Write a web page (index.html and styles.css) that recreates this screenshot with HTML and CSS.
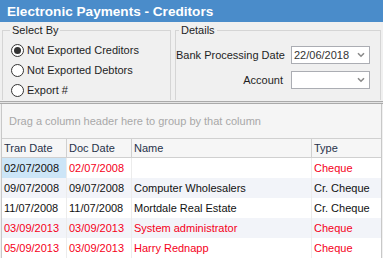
FILE: index.html
```html
<!DOCTYPE html>
<html lang="en">
<head>
    <meta charset="UTF-8">
    <title>Electronic Payments - Creditors</title>
    <link rel="stylesheet" href="styles.css">
</head>
<body>

<div class="window">
    <div class="titlebar">Electronic Payments - Creditors</div>

    <div class="filters">
        <fieldset class="group select-by">
            <legend>Select By</legend>
            <label class="radio"><span class="circle checked"></span>Not Exported Creditors</label>
            <label class="radio"><span class="circle"></span>Not Exported Debtors</label>
            <label class="radio"><span class="circle"></span>Export #</label>
        </fieldset>

        <fieldset class="group details">
            <legend>Details</legend>
            <div class="field-grid">
                <span class="field-label">Bank Processing Date</span>
                <div class="combo">
                    <span>22/06/2018</span>
                    <svg class="chevron" width="8" height="6" viewBox="0 0 8 6"><path d="M1 1.2 L4 4.2 L7 1.2" fill="none" stroke="#8a8a8a" stroke-width="1.6"/></svg>
                </div>
                <span class="field-label">Account</span>
                <div class="combo">
                    <span></span>
                    <svg class="chevron" width="8" height="6" viewBox="0 0 8 6"><path d="M1 1.2 L4 4.2 L7 1.2" fill="none" stroke="#8a8a8a" stroke-width="1.6"/></svg>
                </div>
            </div>
        </fieldset>
    </div>

    <div class="splitter"></div>

    <div class="grid">
        <div class="group-panel">Drag a column header here to group by that column</div>

        <div class="row header">
            <div class="cell">Tran Date</div>
            <div class="cell">Doc Date</div>
            <div class="cell">Name</div>
            <div class="cell">Type</div>
        </div>

        <div class="row">
            <div class="cell selected">02/07/2008</div>
            <div class="cell red">02/07/2008</div>
            <div class="cell"></div>
            <div class="cell red">Cheque</div>
        </div>
        <div class="row alt">
            <div class="cell">09/07/2008</div>
            <div class="cell">09/07/2008</div>
            <div class="cell">Computer Wholesalers</div>
            <div class="cell">Cr. Cheque</div>
        </div>
        <div class="row">
            <div class="cell">11/07/2008</div>
            <div class="cell">11/07/2008</div>
            <div class="cell">Mortdale Real Estate</div>
            <div class="cell">Cr. Cheque</div>
        </div>
        <div class="row alt red">
            <div class="cell">03/09/2013</div>
            <div class="cell">03/09/2013</div>
            <div class="cell">System administrator</div>
            <div class="cell">Cheque</div>
        </div>
        <div class="row red">
            <div class="cell">05/09/2013</div>
            <div class="cell">03/09/2013</div>
            <div class="cell">Harry Rednapp</div>
            <div class="cell">Cheque</div>
        </div>
    </div>
</div>

</body>
</html>
```

FILE: styles.css
```css
body {
    margin: 0;
    font-family: "Liberation Sans", Arial, sans-serif;
    font-size: 11px;
    color: #1e1e1e;
    background-color: #f0f0f0;
}
.window {
    width: 383px;
    height: 258px;
    overflow: hidden;
    background-color: #f0f0f0;
}
.titlebar {
    height: 22px;
    line-height: 23px;
    padding-left: 7px;
    background-color: #4a8cca;
    color: white;
    font-size: 13.6px;
    font-weight: bold;
}

/* filter panel */
.filters {
    display: flex;
    gap: 4px;
    height: 78px;
    padding: 2px 2px 0 2px;
    box-sizing: border-box;
}
.group {
    margin: 0;
    padding: 0;
    min-width: 0;
    border: 1px solid #d5d5d5;
    border-bottom: none;
}
.group legend {
    padding: 0 2px;
    line-height: 13px;
}
.select-by {
    width: 169px;
    box-sizing: border-box;
}
.select-by legend {
    margin-left: 7px;
}
.details {
    flex: 1;
}
.details legend {
    margin-left: 3px;
}
.radio {
    display: flex;
    align-items: center;
    height: 20px;
    padding-left: 8px;
}
.select-by .radio:first-of-type {
    margin-top: 3px;
}
.circle {
    position: relative;
    width: 11px;
    height: 11px;
    margin-right: 3px;
    border: 1px solid #333;
    border-radius: 50%;
    background-color: white;
}
.circle.checked::after {
    content: "";
    position: absolute;
    left: 2px;
    top: 2px;
    width: 7px;
    height: 7px;
    border-radius: 50%;
    background-color: #333;
}
.field-grid {
    display: grid;
    grid-template-columns: 107px 79px;
    grid-auto-rows: 18px;
    column-gap: 8px;
    row-gap: 7px;
    align-items: center;
    margin-top: 9px;
}
.field-label {
    text-align: right;
    white-space: nowrap;
}
.combo {
    display: flex;
    align-items: center;
    justify-content: space-between;
    height: 18px;
    box-sizing: border-box;
    padding: 0 4px 0 2px;
    border: 1px solid #abadb3;
    background-color: white;
    color: #333;
}

.splitter {
    height: 1px;
    margin-top: 1px;
    border-top: 1px solid #aaaaaa;
    border-bottom: 1px solid #aaaaaa;
    background-color: #e4e4e4;
}

/* grid */
.grid {
    margin: 0 1px;
    border-left: 1px solid #c8c8c8;
    border-right: 1px solid #c8c8c8;
    background-color: white;
}
.group-panel {
    height: 34px;
    line-height: 35px;
    padding-left: 7px;
    background-color: #f5f5f5;
    color: #a8a8a8;
    border-bottom: 1px solid #d0d0d0;
}
.row {
    display: grid;
    grid-template-columns: 65px 65px 180px auto;
    height: 20px;
    line-height: 20px;
    color: #111;
}
.row.alt {
    background-color: #f2f4f9;
}
.row.header {
    height: 18px;
    line-height: 18px;
    background-color: #f6f6f6;
    border-bottom: 1px solid #d0d0d0;
    color: #27324a;
}
.cell {
    padding-left: 2px;
    border-right: 1px solid #ececec;
    white-space: nowrap;
    overflow: hidden;
}
.header .cell {
    border-right-color: #d0d0d0;
}
.cell:last-child {
    border-right: none;
}
.cell.selected {
    background-color: #cce5f7;
}
.red,
.row.red {
    color: #f5001a;
}
```
